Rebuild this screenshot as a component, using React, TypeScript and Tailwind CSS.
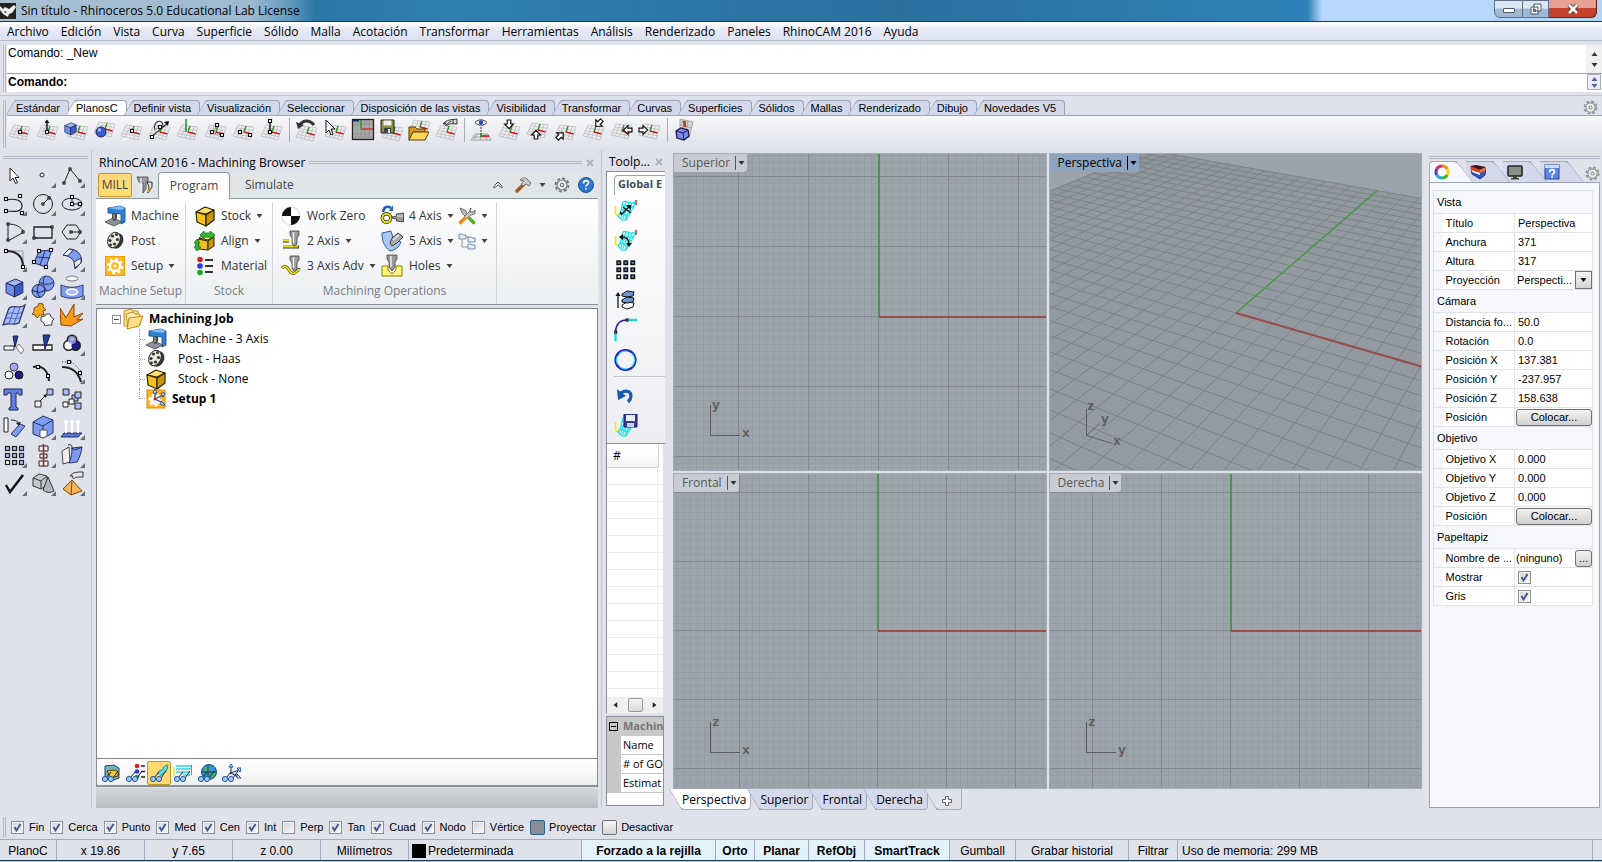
import React, { ReactNode } from "react";

/* ---------- fonts ---------- */
const UI = "font-['Open_Sans','Noto_Sans',sans-serif]";

/* ---------- small drawing helpers ---------- */
const Sq = ({ x, y, f = "#fff", s = 3 }: { x: number; y: number; f?: string; s?: number }) => (
  <rect x={x - s / 2} y={y - s / 2} width={s} height={s} fill={f} stroke="#111" strokeWidth="1.1" />
);

const Svg = ({ s = 24, children, className = "" }: { s?: number; children: ReactNode; className?: string }) => (
  <svg width={s} height={s} viewBox={`0 0 ${s} ${s}`} fill="none" className={`shrink-0 ${className}`} aria-hidden="true">
    {children}
  </svg>
);

const Down = ({ c = "#444" }: { c?: string }) => (
  <svg width="7" height="4" viewBox="0 0 7 4" aria-hidden="true" className="shrink-0">
    <path d="M0.5 0h6L3.5 4z" fill={c} />
  </svg>
);

const Plane = ({ dx = 0, dy = 0 }: { dx?: number; dy?: number }) => {
  const a = [6, 7], b = [22, 9], c = [18, 22], d = [1, 18];
  let path = "";
  for (let i = 0; i <= 4; i++) {
    const t = i / 4;
    const m = (p: number[], q: number[]) => `${(p[0] + (q[0] - p[0]) * t).toFixed(1)} ${(p[1] + (q[1] - p[1]) * t).toFixed(1)}`;
    path += `M${m(a, d)}L${m(b, c)}M${m(a, b)}L${m(d, c)}`;
  }
  return (
    <g transform={`translate(${dx} ${dy})`}>
      <path d={path} stroke="#bcbcbc" strokeWidth="0.8" />
      <path d="M12 14l2-6" stroke="#2a9a2a" strokeWidth="1.5" />
      <path d="M12 14l7.500 2" stroke="#d01818" strokeWidth="1.6" />
    </g>
  );
};

const Arrow = ({ x, y, r = 0 }: { x: number; y: number; r?: number }) => (
  <path d="M-1.8 -4h3.6v4h2.6l-4.4 4.6l-4.4 -4.6h2.6z" transform={`translate(${x} ${y}) rotate(${r})`} fill="#fff" stroke="#111" strokeWidth="1.2" />
);

const Cube = ({ x = 0, y = 0, k = 1, a = "#9db4f5", b = "#7391ec", c = "#3c5bc4" }: { x?: number; y?: number; k?: number; a?: string; b?: string; c?: string }) => (
  <g transform={`translate(${x} ${y}) scale(${k})`} stroke="#1b2450" strokeWidth="0.9" strokeLinejoin="round">
    <path d="M1 5l9-4 7 3-8 4z" fill={a} />
    <path d="M1 5l8 3v10l-8-4z" fill={b} />
    <path d="M9 8l8-4v10l-8 4z" fill={c} />
  </g>
);

/* ---------- construction-plane toolbar ---------- */
const cplane: { name: string; icon: ReactNode }[][] = [
  [
    { name: "Definir origen", icon: <><Plane /><Sq x={12} y={14} /></> },
    { name: "Elevación", icon: <><Plane /><path d="M11 14V3" stroke="#111" strokeWidth="1.4" /><path d="M8.500 5L11 1.500 13.500 5z" fill="#111" /><Sq x={11} y={14} /></> },
    { name: "A objeto", icon: <><Plane dx={2} /><Cube x={0} y={4} k={0.72} /></> },
    { name: "A superficie", icon: <><Plane dy={-3} dx={1} /><circle cx="9" cy="14" r="5" fill="#3c5bd0" stroke="#16245e" /><circle cx="7.500" cy="12" r="1.700" fill="#a9bdff" /></> },
    { name: "Perpendicular a curva", icon: <><path d="M3 22C16 20 9 4 22 2" stroke="#fff" strokeWidth="1.8" /><Plane /><Sq x={12} y={13} /></> },
    { name: "Rotar", icon: <><Plane /><path d="M2 20L20 5M7 12C4 2 16 0 15 9" stroke="#333" strokeWidth="1.1" /><path d="M16 4l5-1-1 5z" fill="#111" /><Sq x={12} y={9} /><Sq x={4} y={19} /></> },
    { name: "Vertical", icon: <><Plane /><path d="M10 14V1" stroke="#2a9a2a" strokeWidth="1.6" /></> },
    { name: "Por tres puntos", icon: <><Plane /><path d="M9 15l4-8M9 15l9 2" stroke="#333" strokeDasharray="1 1" /><Sq x={8} y={14} /><Sq x={13} y={7} /><Sq x={18} y={17} /></> },
    { name: "Eje X", icon: <><Plane /><Sq x={8} y={14} /><Sq x={18} y={17} /></> },
    { name: "Eje Z", icon: <><Plane /><path d="M10 14V4" stroke="#111" strokeWidth="1.4" /><Sq x={10} y={3} /><Sq x={10} y={14} /></> },
  ],
  [
    { name: "Deshacer", icon: <><Plane dy={1} /><path d="M4 8C8 1 15 2 19 7" stroke="#333" strokeWidth="3" /><path d="M1 4l2 7 6-4z" fill="#333" /></> },
    { name: "Seleccionar plano", icon: <><Plane dx={1} /><path d="M3 2v13l3-3 2 5 2-1-2-5h4z" fill="#fff" stroke="#111" /></> },
    {
      name: "Vista en planta",
      icon: <><rect x="1.500" y="1.500" width="21" height="20" fill="#a9a9a9" stroke="#222" strokeWidth="1.300" /><path d="M6 2v19M10 2v19M14 2v19M18 2v19M2 6h20M2 16h20M2 19h20" stroke="#8f8f8f" strokeWidth="0.800" /><path d="M10 2v9" stroke="#2a9a2a" strokeWidth="1.500" /><path d="M10 11h12" stroke="#d03030" strokeWidth="1.500" /><path d="M2 2h6v1.500H2z" fill="#1a2580" /></>,
    },
    { name: "Guardar plano", icon: <><Plane dx={2} dy={1} /><path d="M2 2h13v13H2z" fill="#8f8a3c" stroke="#222" /><path d="M4.500 2.500h8v5h-8z" fill="#eee" /><path d="M5 10h7v5H5z" fill="#444" /><path d="M9 11h2v4H9z" fill="#ddd" /></> },
    { name: "Abrir plano", icon: <><Plane dy={-5} dx={1} /><path d="M2 9h6l2 2h8v3H7l-4 8H2z" fill="#d99a20" stroke="#5a3a00" /><path d="M6 14h16l-4 8H2z" fill="#ffd65c" stroke="#5a3a00" /></> },
    { name: "Propiedades", icon: <><Plane /><path d="M8 6c4-5 8-4 14-5v5c-5 0-7-1-9 1s-4 0-2-2z" fill="#d9d9d9" stroke="#333" /><path d="M11 7l5-4M18 1v5" stroke="#333" /></> },
  ],
  [
    { name: "Plano desde vista", icon: <><path d="M5 16h13l3 6H1zM11 16l-1 6M3 19h17M7 16l-3 6M15 16l2 6" stroke="#a0a0a0" /><path d="M11 9v10" stroke="#333" strokeDasharray="2 1" /><path d="M11 15v4" stroke="#2a9a2a" strokeWidth="1.600" /><path d="M11 18h8" stroke="#d01818" strokeWidth="1.600" /><path d="M5 4.500C8 1 14 1 17 4.500 14 8 8 8 5 4.500z" fill="#fff" stroke="#333" /><circle cx="11" cy="4.500" r="2.200" fill="#2b46c0" /></> },
    { name: "Superior", icon: <><Plane /><Arrow x={11} y={6} /></> },
    { name: "Inferior", icon: <><Plane dy={-2} /><Arrow x={10} y={17} r={180} /></> },
    { name: "Frontal", icon: <><Plane /><Arrow x={6} y={18} r={225} /></> },
    { name: "Posterior", icon: <><Plane /><Arrow x={17} y={5} r={45} /></> },
    { name: "Derecha", icon: <><Plane dy={-1} /><Arrow x={18} y={12} r={90} /></> },
    { name: "Izquierda", icon: <><Plane dy={-1} /><Arrow x={5} y={12} r={270} /></> },
  ],
  [{ name: "Plano a objeto", icon: <><path d="M7 1l13 3-4 16-9-4z" fill="#d4d4d4" stroke="#aaa" /><path d="M11 2l-1 10M15 3l-2 11M7 7l12 3" stroke="#999" strokeWidth="0.800" /><path d="M12 9l-2-6" stroke="#2a9a2a" strokeWidth="1.600" /><path d="M12 9V3" stroke="#d01818" strokeWidth="1.600" /><path d="M3 13l5-3 7 2 1 6-5 4-7-2z" fill="#7f8cf5" stroke="#15193f" strokeWidth="1.300" /><path d="M3 13l7 2 5-3M10 15l1 7" stroke="#15193f" /></> }],
];

/* ---------- left tool palette ---------- */
const blue = "#7f9bf0";
const lb = "#a9bcf7";
const K = "#222";
const palette: { n: string; i: ReactNode; nofold?: boolean }[] = [
  { n: "Seleccionar", nofold: true, i: <path d="M8 5v13l3-3 2.500 5.500 2-1L13 14.500h4z" fill="#fff" stroke={K} /> },
  { n: "Punto", i: <circle cx="11" cy="12" r="2" fill="#fff" stroke={K} /> },
  { n: "Polilínea", i: <><path d="M4 20L10 6l11 13" stroke={K} /><Sq x={4} y={20} s={2} /><Sq x={10} y={6} s={2} /><Sq x={20} y={18} s={2} /></> },
  { n: "Curva", i: <><path d="M4 9c9-2 16 0 16 6s-7 6-16 5" stroke={K} strokeWidth="1.200" /><Sq x={4} y={8} /><Sq x={18} y={5} /><Sq x={4} y={20} /><Sq x={20} y={22} /></> },
  { n: "Círculo", i: <><circle cx="12" cy="13" r="9.500" stroke={K} /><path d="M12 13l6-6" stroke={K} /><Sq x={12} y={13} s={2} /><Sq x={18} y={7} s={2} /></> },
  { n: "Elipse", i: <><ellipse cx="12" cy="13" rx="10" ry="6" stroke={K} /><path d="M12 6v7h9" stroke={K} /><Sq x={12} y={6} /><Sq x={12} y={13} /><Sq x={20} y={13} /></> },
  { n: "Arco", i: <><path d="M6 5v17L22 13M6 5c8 0 13 3 16 8" stroke={K} /><Sq x={6} y={5} s={2} /><Sq x={6} y={21} s={2} /><Sq x={21} y={13} s={2} /></> },
  { n: "Rectángulo", i: <><path d="M3 8h18v11H3z" stroke={K} strokeWidth="1.300" /><Sq x={3} y={19} s={2} /><Sq x={21} y={8} s={2} /></> },
  { n: "Polígono", i: <><path d="M7 6h9l5 7-5 7H7l-5-7z" stroke={K} /><path d="M11 13h8" stroke={K} /><Sq x={11} y={13} s={2} /><Sq x={20} y={13} s={2} /></> },
  { n: "Empalme", i: <><path d="M4 4h17v17" stroke="#999" /><path d="M4 4c10 0 17 4 17 16" stroke={K} strokeWidth="2" /><Sq x={4} y={4} /><Sq x={21} y={20} /></> },
  { n: "Superficie por puntos", i: <><path d="M8 4l13-1-6 17-12-4z" fill={blue} stroke="#27335f" /><path d="M14 4L9 18M6 10l13 1" stroke="#27335f" /><Sq x={8} y={4} /><Sq x={20} y={3} /><Sq x={3} y={15} /><Sq x={15} y={20} /></> },
  { n: "Barrido", i: <><path d="M3 8l6-6c9 0 14 7 12 14l-6 6C16 14 11 9 3 8z" fill={blue} stroke="#27335f" /><path d="M3 8l6-6 4 1-5 6zM15 21l-1-6 7-4v5z" fill="#eef" stroke="#27335f" /></> },
  { n: "Caja", i: <Cube x={3} y={3} k={1.05} /> },
  { n: "Esferas", i: <><circle cx="15.500" cy="8.500" r="7.500" fill={blue} stroke="#27335f" /><path d="M8 7c5 3 10 3 15 0M14 1c-3 5-2 11 2 15" stroke="#27335f" /><circle cx="7.500" cy="16" r="6.500" fill={blue} stroke="#1a2550" /><path d="M1 15c5 3 9 3 13 0M8 9.500c-3 4-2 9 1 13" stroke="#1a2550" /></> },
  { n: "Tubo", i: <><ellipse cx="12" cy="3.500" rx="6" ry="2.500" stroke="#777" fill="#f4f4f4" /><path d="M1 10c7 3 15 3 22 0v11c-7 3-15 3-22 0z" fill={blue} stroke="#27335f" /><ellipse cx="12" cy="17" rx="5.500" ry="3" fill={lb} stroke="#fff" strokeWidth="1.600" /></> },
  { n: "Malla", i: <><path d="M7 5c6-4 9 2 16-3l-6 18c-6 3-9-1-16 2z" fill={lb} stroke="#27335f" strokeWidth="1.200" /><path d="M13 4L7 20M18 4l-6 17M5 11c6-3 10 2 15-2M3 16c6-3 10 2 15-2" stroke="#4a66c4" /></> },
  { n: "Unir", nofold: true, i: <><path d="M3 5l4-2 1-3 4 1 0 3 3 3-3 1 1 4-4 0-3 3-2-3-3-1 2-2z" fill="#f5a81c" stroke="#7a4a00" /><path d="M10 14l4-1 1-2 4 0 1 3 3 2-2 2 0 4-4 0-3 1-1-3-3-2z" fill="#fafafa" stroke="#444" /></> },
  { n: "Explotar", nofold: true, i: <path d="M1 22L0 5l6 10L14 1v13l9-4-6 7 6-1-12 7z" fill="#f99a1c" stroke="#8a4400" /> },
  { n: "Recortar", nofold: true, i: <><path d="M2 15h10v4H2z" fill="#fff" stroke={K} /><path d="M14 16l3-3 5 6-3 4z" fill="#f3f3f3" stroke="#777" /><path d="M11 5h5l-3 11z" fill="#24409a" stroke="#111c55" /></> },
  { n: "Partir", nofold: true, i: <><path d="M2 14h19v5H2z" fill="#fff" stroke={K} strokeWidth="1.300" /><path d="M12 4h7l-5 14z" fill="#24409a" stroke="#111c55" /></> },
  { n: "Unión booleana", i: <><g stroke={K} strokeWidth="3"><circle cx="12" cy="9" r="4" /><circle cx="8.500" cy="14.500" r="4" /><circle cx="15.500" cy="14.500" r="4" /></g><circle cx="8.500" cy="14.500" r="4" fill="#fff" /><circle cx="15.500" cy="14.500" r="4" fill="#1c1f80" /><circle cx="12" cy="9" r="4" fill="#a3a5f5" opacity="0.800" /></> },
  { n: "Diferencia booleana", nofold: true, i: <><circle cx="12" cy="8" r="4" fill="#a3a5f5" stroke="#444" /><circle cx="7" cy="16" r="4" fill="#fff" stroke={K} /><circle cx="17" cy="16" r="4" fill="#1c1f80" stroke="#111" /></> },
  { n: "Editar puntos", nofold: true, i: <><path d="M2 8c8-2 15 2 16 14" stroke={K} strokeWidth="2" /><Sq x={7} y={8} /><Sq x={17} y={17} /></> },
  { n: "Puntos de control", i: <><path d="M2 3h10l9 9v10" stroke={K} strokeDasharray="1 2" /><path d="M2 8c9 0 16 4 19 15" stroke={K} strokeWidth="2" /><Sq x={9} y={3} /><Sq x={20} y={14} /></> },
  { n: "Texto", nofold: true, i: <path d="M2 2h18v6h-3l-1-2h-2v14l2 1v2H7v-2l2-1V6H6L5 8H2z" fill="#5f7fe0" stroke="#1b2450" /> },
  { n: "Mover", i: <><path d="M4 14h6v6H4z" fill="#eee" stroke={K} /><path d="M16 2h6v6h-6z" fill={lb} stroke={K} /><path d="M9 14l6-6" stroke={K} /><path d="M16 7l-1 4-3-3z" fill={K} /></> },
  { n: "Copiar", nofold: true, i: <><path d="M3 2h6v6H3zM12 8h6v6h-6zM15 16h6v6h-6z" fill={lb} stroke={K} /><path d="M15 5h6v6h-6z" fill={lb} stroke={K} /><path d="M3 15h5v5H3zM9 12h5v5H9z" fill="#f5f5f5" stroke={K} /></> },
  { n: "Rotar", nofold: true, i: <><path d="M2 3h4v14H2z" fill="#fff" stroke={K} /><path d="M9 19l9-10 5 2-9 11z" fill={blue} stroke="#27335f" /><path d="M9 5c4 0 7 1 8 4" stroke={K} /><path d="M19 7l-2 4-3-3z" fill={K} /></> },
  { n: "Editar sólido", i: <><path d="M2 7l10-6 10 4v13l-10 5-10-4z" fill={blue} stroke="#27335f" /><path d="M2 7l10 4 10-6M12 11v4" stroke="#27335f" /><path d="M9 15h7v6l-4 2-3-1z" fill="#fff" stroke="#555" /></> },
  { n: "Extruir", i: <><path d="M4 18h18l-4 4H1z" fill="#5573d8" stroke="#27335f" /><path d="M6 18V7M12 18V7M18 18V7" stroke="#fff" strokeWidth="2" /><path d="M3.500 8L6 4l2.500 4zM9.500 8L12 4l2.500 4zM15.500 8L18 4l2.500 4z" fill="#fff" /></> },
  { n: "Matriz", i: <>{[3, 10, 17].map((x) => [3, 10, 17].map((y) => <rect key={`${x}-${y}`} x={x + 0.5} y={y + 0.5} width="4" height="4" fill={y === 17 && x === 3 ? "#fff" : lb} stroke={K} strokeWidth="1.200" />))}</> },
  { n: "Alinear", i: <><path d="M8 3h9v5H8zM9 11h7v4H9zM8 18h9v5H8z" fill="#f0f0f0" stroke={K} /><path d="M12.500 1v23" stroke="#c0181c" strokeWidth="1.600" /></> },
  { n: "Flexionar", i: <><path d="M2 8l7-4 1 15-7 2z" fill="#f2f2f2" stroke="#444" /><path d="M12 5l10-1c-1 6-2 10-5 15l-8 1c2-5 3-9 3-15z" fill={blue} stroke="#27335f" /><path d="M12 5l3 2 7-3" stroke="#27335f" /><path d="M8 2c3-1 4 0 4 4" stroke={K} /></> },
  { n: "Comprobar", i: <path d="M4 14l4 7L21 4" stroke="#111" strokeWidth="2.400" /> },
  { n: "Sólidos", i: <><path d="M2 7l6-4 8 2v9l-6 4-8-3z" fill="#c4c7cd" stroke="#333" /><path d="M2 7l8 3 6-5M10 10v8" stroke="#333" /><path d="M17 6l6 14c-3 2-8 2-11-1z" fill="#b3b6bc" stroke="#333" /></> },
  { n: "Propiedades", i: <><path d="M12 9l10 11-11 4-8-6z" fill="#f4b55c" stroke="#7a4a00" /><path d="M12 9l-1 15" stroke="#7a4a00" /><path d="M10 5c3-4 7-4 13-4v5c-5 0-7 0-8 1s-4 0-2-2z" fill="#e6e6e6" stroke="#333" /></> },
];

/* ---------- ribbon icons ---------- */
const IMachine = () => <Svg s={22}><path d="M4 3l12-2 5 2v14l-4 2V9L4 8z" fill="#2f7fd6" stroke="#17477f" strokeWidth="0.800" /><path d="M4 3l12-2 5 2-4 2z" fill="#7fbcf5" /><path d="M1 17l8-4 9 4-8 4z" fill="#8b939d" stroke="#444" strokeWidth="0.800" /><path d="M8 8.500h5v4l-1 3h-3l-1-3z" fill="#444" /><path d="M10 9v5" stroke="#ccc" /></Svg>;
const IPost = () => (
  <Svg s={22}>
    <ellipse cx="13" cy="11" rx="6" ry="8" transform="rotate(25 13 11)" fill="#33333a" />
    <ellipse cx="10" cy="10" rx="6" ry="8" transform="rotate(25 10 10)" fill="#efe9da" stroke="#2c2c33" />
    <circle cx="8.500" cy="6" r="1.600" fill="#33333a" /><circle cx="12.500" cy="4.500" r="1.500" fill="#33333a" /><circle cx="13.500" cy="9.500" r="1.600" fill="#33333a" /><circle cx="6" cy="10.500" r="1.600" fill="#33333a" /><circle cx="10.500" cy="14" r="1.600" fill="#33333a" /><circle cx="6.500" cy="15" r="1.400" fill="#33333a" />
  </Svg>
);
const ISetup = () => <Svg s={22}><rect x="1.500" y="1.500" width="19" height="19" fill="#ffb61c" stroke="#f0a000" /><circle cx="11" cy="11" r="5" stroke="#fff" strokeWidth="2.500" /><circle cx="11" cy="11" r="7.200" stroke="#fff" strokeWidth="2.200" strokeDasharray="2.800 2.850" /><circle cx="11" cy="11" r="1.600" fill="#fff" /></Svg>;
const IStock = () => <Svg s={22}><g stroke="#2b2300" strokeWidth="1.200" strokeLinejoin="round"><path d="M2 7l9-5 9 3-8 4z" fill="#ffdf6e" /><path d="M2 7l10 3v11l-9-4z" fill="#f6c21c" /><path d="M12 10l8-5v10l-8 6z" fill="#c99708" /></g></Svg>;
const IAlign = () => <Svg s={22}><g stroke="#2b2300" strokeLinejoin="round"><path d="M5 8l6-4 9 2-6 4z" fill="#ffe27a" /><path d="M4 9l10 2v9l-9-1z" fill="#eebf25" /><path d="M14 11l6-4v9l-6 4z" fill="#c99708" /></g><path d="M6 5l4-4v2h6V1l5 4-5 4V7h-6v2zM3 9l3 4H4.500v4H7l-4 4-3-4h1.500v-4H0z" fill="#2ebb33" stroke="#0c6a10" strokeWidth="0.700" /></Svg>;
const IMaterial = () => <Svg s={22}><circle cx="6" cy="4.500" r="2.800" fill="#e02020" /><circle cx="6" cy="11" r="2.800" fill="#2838e0" /><circle cx="6" cy="17.500" r="2.800" fill="#1fa52a" /><path d="M11 5h8M11 11h8M11 17h8" stroke="#333" strokeWidth="1.800" /></Svg>;
const IZero = () => <Svg s={22}><circle cx="11" cy="11" r="9" fill="#fff" stroke="#bbb" strokeWidth="0.600" /><path d="M11 11V2a9 9 0 0 0-9 9zM11 11v9a9 9 0 0 0 9-9z" fill="#111" /></Svg>;
const tool = <><path d="M10 1h9v4l-2 3v5l-1.500 3h-2L12 13V8l-2-3z" fill="#9a9a9a" stroke="#444" strokeWidth="0.800" /><path d="M13.500 2v11" stroke="#eee" strokeWidth="1.500" /></>;
const I2Axis = () => <Svg s={22}><path d="M3 11h6M3 17h16" stroke="#333" strokeWidth="3" /><path d="M3 10.500h6M3 16.500h15" stroke="#f3e400" strokeWidth="1.800" />{tool}</Svg>;
const I3Axis = () => <Svg s={22}><path d="M2 13c3-3 5-1 7 2s4 5 7 2 2-3 4-2" stroke="#333" strokeWidth="3" /><path d="M2 13c3-3 5-1 7 2s4 5 7 2 2-3 4-2" stroke="#f3e400" strokeWidth="1.800" />{tool}</Svg>;
const I4Axis = () => <Svg s={24}><path d="M3 8C4 2 8 2 11 4" stroke="#1b5fc4" strokeWidth="2.500" /><path d="M9 7l4 0V1z" fill="#1b5fc4" /><circle cx="6.500" cy="14" r="4.200" fill="#fff" stroke="#222" strokeWidth="3.400" /><circle cx="6.500" cy="14" r="4.200" stroke="#f3e400" strokeWidth="2" /><path d="M11.500 13l5-1v-2l7-1v9l-7-1v-2l-5-1z" fill="#999" stroke="#333" strokeWidth="0.800" /><path d="M17 12h6" stroke="#eee" /></Svg>;
const I5Axis = () => <Svg s={24}><path d="M2 4l9-2 2 7 8 4c-2 5-5 8-11 9C3 17 2 10 2 4z" fill="#a9c8f0" stroke="#2f5c9c" /><path d="M10 14l2-5 6-5 5 4-6 6-5 3z" fill="#a9a9a9" stroke="#444" /><path d="M13 11l6-5" stroke="#eee" strokeWidth="1.500" /></Svg>;
const IHoles = () => <Svg s={24}><path d="M2 12h6v4l4 4 4-4v-4h6v10H2z" fill="#fff47a" stroke="#8a7d00" /><path d="M7 1h10v4l-2 3v5l-3 4-3-4V8L7 5z" fill="#9a9a9a" stroke="#444" strokeWidth="0.800" /><path d="M11 2v11" stroke="#eee" strokeWidth="1.500" /></Svg>;
const ITools = () => <Svg s={18}><path d="M2 1l5 2 4 6-2 2-5-5z" fill="#bbb" stroke="#555" strokeWidth="0.800" /><path d="M13 1l-1 4 4 0 1-2v4l-4 1-5 4-2-2 5-5z" fill="#ccc" stroke="#555" strokeWidth="0.800" /><path d="M6.500 11.500l-4 4" stroke="#f08c1c" strokeWidth="3.600" strokeLinecap="round" /><path d="M11.500 11.500l4 4" stroke="#5cab20" strokeWidth="3.600" strokeLinecap="round" /></Svg>;
const ITree = () => <Svg s={18}><path d="M4 7v8h7M4 5h8" stroke="#8596ae" /><path d="M1 2h3l1 1h3v4H1zM10 5h3l1 1h3v4h-7zM10 12h3l1 1h3v4h-7z" fill="#e9eef5" stroke="#7d90ab" /></Svg>;
const glasses = <><path d="M5 15l5-6M12 15l5-7" stroke="#222" /><circle cx="4" cy="16" r="2.600" fill="#9dc8f5" stroke="#2c5aa0" /><circle cx="10" cy="16" r="2.600" fill="#9dc8f5" stroke="#2c5aa0" /></>;

const Surface = ({ children }: { children?: ReactNode }) => (
  <Svg s={24}>
    <path d="M1.500 8v8l5 4" stroke="#f2ee00" strokeWidth="1.600" />
    <path d="M22 2v5" stroke="#d01818" strokeWidth="1.400" />
    <path d="M9 4c4-3 6 4 12 0-1 8-6 10-8 17-4 3-7 0-9-3 4-4 3-9 5-14zM12 3c-1 7-4 9-5 17M15 4c-1 8-5 9-6 17M18 5c-1 7-5 9-7 17M8 8c4-3 6 4 12 0M7 12c4-3 6 4 11 0M6 16c4-3 5 4 9 1" stroke="#0fe5ea" strokeWidth="1.200" />
    {children}
  </Svg>
);

const Gear = ({ s = 16, c = "#8a8d93" }: { s?: number; c?: string }) => (
  <svg width={s} height={s} viewBox="0 0 16 16" fill="none" aria-hidden="true">
    <circle cx="8" cy="8" r="6.600" stroke={c} strokeWidth="1.700" strokeDasharray="3 2.180" />
    <circle cx="8" cy="8" r="5" stroke={c} strokeWidth="1.200" fill="#f0f0f0" />
    <circle cx="8" cy="8" r="1.700" stroke={c} strokeWidth="1.100" />
  </svg>
);

/* ---------- viewports ---------- */
function gridPath(ox: number, oy: number, major: number, wantMajor: boolean) {
  let d = "";
  for (let i = -80; i <= 300; i++) {
    if ((i % 10 === 0) !== wantMajor) continue;
    const x = Math.round(ox + (i * major) / 10) + 0.5;
    const y = Math.round(oy + (i * major) / 10) + 0.5;
    if (x > 0) d += `M${x} 0V2400`;
    if (y > 0) d += `M0 ${y}H3200`;
  }
  return d;
}

const axisText = "font-['Liberation_Mono','DejaVu_Sans_Mono',monospace] text-[13px] font-bold";

const Ortho = ({ ox, oy, major, ay, h, v }: { ox: number; oy: number; major: number; ay: number; h: string; v: string }) => (
  <svg className="block h-full w-full" aria-hidden="true">
    <path d={gridPath(ox, oy, major, false)} stroke="#949ba3" strokeWidth="1" />
    <path d={gridPath(ox, oy, major, true)} stroke="#84878f" strokeWidth="1" />
    <rect x={ox} y="0" width="2" height={oy} fill="#4a994a" />
    <rect x={ox + 1} y={oy} width="3000" height="2" fill="#994a4a" />
    <path d={`M36.500 ${ay - 30}V${ay + 0.5}H66`} stroke="#5c5c60" fill="none" />
    <text x="38" y={ay - 26} fill="#5c5c60" className={axisText}>{v}</text>
    <text x="68" y={ay + 2} fill="#5c5c60" className={axisText}>{h}</text>
  </svg>
);

function project(x: number, y: number) {
  const depth = 317.3 - 0.433 * x + 0.75 * y;
  return `${(186 + (660 * (0.866 * x + 0.5 * y)) / depth).toFixed(1)} ${(159 - (660 * (-0.25 * x + 0.433 * y)) / depth).toFixed(1)}`;
}
function perspLines(step: number) {
  let d = "";
  for (let i = -200; i <= 200; i += step) d += `M${project(i, -200)}L${project(i, 200)}M${project(-200, i)}L${project(200, i)}`;
  return d;
}

const Persp = () => (
  <svg className="block h-full w-full" aria-hidden="true" fill="none">
    <path d={`M${project(-200, -200)}L${project(200, -200)}L${project(200, 200)}L${project(-200, 200)}z`} fill="#959ca4" />
    <path d={perspLines(2)} stroke="#8b9199" strokeWidth="1" opacity="0.300" />
    <path d={perspLines(10)} stroke="#7f828a" strokeWidth="1" />
    <path d={`M${project(0, 0)}L${project(0, 200)}`} stroke="#4a994a" strokeWidth="1.600" />
    <path d={`M${project(0, 0)}L${project(200, 0)}`} stroke="#994a4a" strokeWidth="2" />
    <path d="M36.500 255v26.500l13-12M36.500 281.500l26 8" stroke="#5c5c60" />
    <text x="37" y="256" fill="#5c5c60" className={axisText}>z</text>
    <text x="51" y="269" fill="#5c5c60" className={axisText}>y</text>
    <text x="63" y="291" fill="#5c5c60" className={axisText}>x</text>
  </svg>
);

const Viewport = ({ name, active, children }: { name: string; active?: boolean; children: ReactNode }) => (
  <section className="relative min-h-0 min-w-0 overflow-hidden border border-[#a3a9b6] bg-[#9da3ab]" aria-label={name}>
    {children}
    <button type="button" className={`absolute top-0 left-0 flex h-[18px] items-center pl-2 text-xs ${active ? "bg-[#8ea5c2] text-black" : "rounded-br bg-[#c9cdd3] text-[#555]"}`}>
      {name}
      <span className="ml-[5px] flex h-[14px] items-center border-l border-current pr-[2px] pl-[2px]"><Down c={active ? "#000" : "#333"} /></span>
    </button>
  </section>
);

/* ---------- controls ---------- */
const Check = ({ label, on }: { label: string; on?: boolean }) => (
  <label className="flex items-center gap-[5px]">
    <Box on={on} />
    {label}
  </label>
);
const Box = ({ on, label }: { on?: boolean; label?: string }) => (
  <span className="relative block h-[13px] w-[13px] shrink-0">
    <input type="checkbox" defaultChecked={on} aria-label={label} className="peer block h-[13px] w-[13px] appearance-none border border-[#8e8f8f] bg-linear-to-br from-[#cfd2d6] to-[#fbfbfb] outline-1 -outline-offset-2 outline-[#f4f4f4]" />
    <svg width="13" height="13" viewBox="0 0 13 13" className="pointer-events-none absolute inset-0 hidden peer-checked:block" aria-hidden="true">
      <path d="M3.500 6l2 3.500L9.500 3" fill="none" stroke="#41578f" strokeWidth="1.900" />
    </svg>
  </span>
);

const Grip = () => <div className="h-[3px] grow border-y border-[#b4bac9]" />;

const RibbonBtn = ({ icon, label, dd }: { icon: ReactNode; label?: string; dd?: boolean }) => (
  <button type="button" className="flex h-[25px] items-center gap-[5px] whitespace-nowrap" aria-label={label ?? "Más"}>
    {icon}
    {label}
    {dd && <Down />}
  </button>
);

const menus = ["Archivo", "Edición", "Vista", "Curva", "Superficie", "Sólido", "Malla", "Acotación", "Transformar", "Herramientas", "Análisis", "Renderizado", "Paneles", "RhinoCAM 2016", "Ayuda"];
const tabs = ["Estándar", "PlanosC", "Definir vista", "Visualización", "Seleccionar", "Disposición de las vistas", "Visibilidad", "Transformar", "Curvas", "Superficies", "Sólidos", "Mallas", "Renderizado", "Dibujo", "Novedades V5"];

/* ---------- properties ---------- */
type Row = [string, string, ("select" | "button" | "file" | "check")?];
const props: { title: string; rows: Row[] }[] = [
  { title: "Vista", rows: [["Título", "Perspectiva"], ["Anchura", "371"], ["Altura", "317"], ["Proyección", "Perspecti...", "select"]] },
  { title: "Cámara", rows: [["Distancia fo...", "50.0"], ["Rotación", "0.0"], ["Posición X", "137.381"], ["Posición Y", "-237.957"], ["Posición Z", "158.638"], ["Posición", "Colocar...", "button"]] },
  { title: "Objetivo", rows: [["Objetivo X", "0.000"], ["Objetivo Y", "0.000"], ["Objetivo Z", "0.000"], ["Posición", "Colocar...", "button"]] },
  { title: "Papeltapiz", rows: [["Nombre de ...", "(ninguno)", "file"], ["Mostrar", "", "check"], ["Gris", "", "check"]] },
];

const Value = ({ row }: { row: Row }) => {
  const [name, value, kind] = row;
  if (kind === "select")
    return (
      <div className="relative flex h-[18px] items-center">
        <select aria-label={name} className="h-[18px] w-full appearance-none bg-white pl-[2px] outline-none"><option>{value}</option></select>
        <span className="pointer-events-none absolute right-0 flex h-[18px] w-[17px] items-center justify-center border border-[#707070] bg-linear-to-b from-[#f4f4f4] to-[#d4d4d4]"><Down c="#000" /></span>
      </div>
    );
  if (kind === "button")
    return <button type="button" className="ml-px block h-[17px] w-[76px] rounded-[3px] border border-[#707070] bg-linear-to-b from-[#f4f4f4] to-[#cfcfcf] leading-none">{value}</button>;
  if (kind === "file")
    return (
      <div className="flex h-[18px] items-center justify-between pl-px">
        {value}
        <button type="button" aria-label="Examinar" className="h-[17px] w-[17px] rounded-[3px] border border-[#707070] bg-linear-to-b from-[#f4f4f4] to-[#cfcfcf] leading-none">...</button>
      </div>
    );
  if (kind === "check") return <div className="pl-[3px]"><Box on label={name} /></div>;
  return <input aria-label={name} defaultValue={value} className="block h-[18px] w-full pl-[3px] outline-none" />;
};

const sideTabs: { n: string; z: string; i: ReactNode }[] = [
  { n: "Propiedades", z: "z-40", i: <Svg s={16}><path d="M8 2a6 6 0 0 1 5.200 3" stroke="#f08a1c" strokeWidth="3" /><path d="M13.200 5a6 6 0 0 1 0 6" stroke="#e8d820" strokeWidth="3" /><path d="M13.200 11A6 6 0 0 1 8 14" stroke="#35b83a" strokeWidth="3" /><path d="M8 14a6 6 0 0 1-5.200-3" stroke="#25a8d8" strokeWidth="3" /><path d="M2.800 11a6 6 0 0 1 0-6" stroke="#4a3fd0" strokeWidth="3" /><path d="M2.800 5A6 6 0 0 1 8 2" stroke="#d82a8a" strokeWidth="3" /></Svg> },
  { n: "Capas", z: "z-30", i: <Svg s={16}><path d="M1 6l9 3 6-5-1 7-5 4-8-5z" fill="#2f57c0" stroke="#16245e" strokeWidth="0.800" /><path d="M1 5l9 3v3L2 8z" fill="#f5f5f5" /><path d="M0 2l10 4v3L1 6z" fill="#e23a1c" /><path d="M0 2l6-1 10 2-6 3z" fill="#3a1510" /><path d="M10 6l6-3-1 4-5 2z" fill="#f56a3a" /></Svg> },
  { n: "Visualización", z: "z-20", i: <Svg s={16}><rect x="1" y="2" width="14" height="10" rx="1" fill="#888e86" stroke="#222" strokeWidth="1.600" /><path d="M6 12h4v2h2v1.500H4V14h2z" fill="#444" /></Svg> },
  { n: "Ayuda", z: "z-10", i: <Svg s={16}><rect x="1" y="1" width="14" height="14" fill="#5b83e8" stroke="#2a4694" /><path d="M1 1h14v3H1z" fill="#cfdcf8" /><path d="M5.500 8.500c0-4 5-3.500 5-.500 0 2-2.500 1.800-2.500 3.500M8 12.500v1.500" stroke="#fff" strokeWidth="1.600" /></Svg> },
];

const status: { t: string; c: string }[] = [
  { t: "PlanoC", c: "w-[57px]" }, { t: "x 19.86", c: "w-[88px]" }, { t: "y 7.65", c: "w-[88px]" }, { t: "z 0.00", c: "w-[88px]" }, { t: "Milímetros", c: "w-[88px]" },
];
const toggles: { t: string; c: string; on?: boolean }[] = [
  { t: "Forzado a la rejilla", c: "w-[134px]", on: true }, { t: "Orto", c: "w-[39px]", on: true }, { t: "Planar", c: "w-[54px]", on: true }, { t: "RefObj", c: "w-[56px]", on: true }, { t: "SmartTrack", c: "w-[85px]", on: true },
  { t: "Gumball", c: "w-[66px]" }, { t: "Grabar historial", c: "w-[113px]" }, { t: "Filtrar", c: "w-[49px]" },
];

const tree: { t: string; i: ReactNode }[] = [
  { t: "Machine - 3 Axis", i: <IMachine /> },
  { t: "Post - Haas", i: <IPost /> },
  { t: "Stock - None", i: <IStock /> },
];

const browserTools: { n: string; i: ReactNode }[] = [
  { n: "Stock", i: <><path d="M4 3l9-1 5 3v10l-8 3-6-4z" fill="#6db3c2" stroke="#1d4652" /><path d="M6 8l8-1 3 2v4l-7 2z" fill="#f3c53a" stroke="#5a4300" /></> },
  { n: "Material", i: <><circle cx="12" cy="3" r="2.300" fill="#e02020" /><circle cx="12" cy="8.500" r="2.300" fill="#2838e0" /><circle cx="12" cy="14" r="2.300" fill="#1fa52a" /><path d="M16 3h4M16 8.500h4M16 14h4" stroke="#222" strokeWidth="1.500" /></> },
  { n: "Toolpath", i: <><path d="M8 11l3-4c4 2 2-5 8-5l-1 5c-3 1-4 5-7 6" fill="#5fe0e6" stroke="#178f98" /></> },
  { n: "Lista", i: <><path d="M1 4v9" stroke="#f2ee00" strokeWidth="1.600" /><path d="M3 3h15M3 6h15M3 9h14M10 12h7" stroke="#2fd3dc" strokeWidth="1.500" /><path d="M18.500 2v10" stroke="#888" /></> },
  { n: "Mundo", i: <><circle cx="12" cy="9" r="7.500" fill="#2f93d8" stroke="#14507e" /><path d="M7 5l5-2 1 4-4 3zM13 10l5-1-2 5-3 1z" fill="#46b84a" /><path d="M11 2v14M5 9h14" stroke="#123a70" /></> },
  { n: "Ejes", i: <><path d="M10 10V3M10 10l8-3M10 10l7 4" stroke="#1c48a8" strokeWidth="1.200" /><path d="M8 4l2-3 2 3zM16 5l4 0-1 4zM16 11l4 4-4 0z" fill="#fff" stroke="#1c48a8" /><circle cx="10" cy="10" r="1.300" fill="#d01818" /></> },
];

export default function App() {
  return (
    <div className="flex h-screen flex-col overflow-hidden bg-[#dfe2eb] font-['Liberation_Sans',Arial,sans-serif] text-[11px] leading-[14px] text-black select-none">
      {/* title bar */}
      <header className={`flex h-[22px] shrink-0 items-start justify-between border-b border-[#1d3a55] bg-[#b5d8fc] ${UI}`}>
        <div className="flex h-[21px] min-w-0 grow items-center bg-[linear-gradient(90deg,#a9c0d3_0,#9ebad0_250px,#5f9abf_290px,#2b77a8_315px,#2e7fb0_450px,#2a71a0_900px,#2f82b9_1308px,#b5d8fc_1322px)]">
          <svg width="16" height="16" viewBox="0 0 16 16" aria-hidden="true"><rect width="16" height="16" fill="#222" /><path d="M0 3l3 3 2-2 4 2 5-4 2 2-4 6-3 1-1 3-5-3-3-4z" fill="#eee" /><path d="M4 8l3 1-2 1z" fill="#222" /></svg>
          <h1 className="ml-[5px] text-xs">Sin título - Rhinoceros 5.0 Educational Lab License</h1>
        </div>
        <div className="flex h-[21px] items-start bg-[#b3d5f5] pr-[5px]">
          <button type="button" aria-label="Minimizar" className="flex h-[18px] w-[29px] items-center justify-center rounded-bl-md border border-[#5c6f85] bg-linear-to-b from-[#dce9f5] from-45% to-[#9fb9d3] to-50%"><span className="mt-[3px] h-[5px] w-[12px] rounded-[1px] border border-[#4d5665] bg-white" /></button>
          <button type="button" aria-label="Restaurar" className="flex h-[18px] w-[26px] items-center justify-center border-y border-r border-[#5c6f85] bg-linear-to-b from-[#dce9f5] from-45% to-[#9fb9d3] to-50%"><Svg s={12}><path d="M4 1h7v7H4zM1 4h7v7H1z" fill="#fff" stroke="#4d5665" /><path d="M3.500 6.500h2v2h-2z" fill="#8fa5bd" stroke="#4d5665" /></Svg></button>
          <button type="button" aria-label="Cerrar" className="flex h-[18px] w-[48px] items-center justify-center rounded-br-md border-r border-b border-[#5a2020] bg-linear-to-b from-[#e5a191] from-45% to-[#c5432c] to-50%"><Svg s={12}><path d="M2 2l8 8M10 2l-8 8" stroke="#5a3030" strokeWidth="4.500" /><path d="M2 2l8 8M10 2l-8 8" stroke="#fff" strokeWidth="2.600" /></Svg></button>
        </div>
      </header>

      {/* menu bar */}
      <nav className={`flex h-[19px] shrink-0 items-center gap-3 border-b border-[#b4b9c8] bg-linear-to-b from-white from-5% via-[#e8ebf5] via-40% to-[#dde2f3] pt-[2px] pl-[7px] text-xs ${UI}`}>
        {menus.map((m) => <button key={m} type="button">{m}</button>)}
      </nav>

      {/* command line */}
      <section className="mt-1 flex shrink-0 border-b border-[#c3c7d1] pb-[3px]" aria-label="Comando">
        <div className="mr-px ml-[3px] w-[3px] border-x border-[#b4bac9]" />
        <div className="flex min-w-0 grow flex-col bg-white">
          <div className="flex h-[29px] justify-between border-b border-[#9aa3b3]">
            <p className="pt-px pl-px text-[12px]">Comando: _New</p>
            <div className="flex w-[16px] flex-col items-center justify-around bg-[#f0f0f0] py-[3px]">
              <span className="rotate-180"><Down c="#333" /></span>
              <Down c="#333" />
            </div>
          </div>
          <div className="flex h-[18px] items-center justify-between pb-[2px] pl-px">
            <label htmlFor="cmd" className="text-[12px] font-bold">Comando:</label>
            <input id="cmd" className="h-4 min-w-0 grow px-1 outline-none" />
            <div className="mr-px flex h-[16px] w-[14px] flex-col items-center justify-around border border-[#a8adb8] bg-[#eceef2]">
              <span className="rotate-180"><Down c="#4b62b0" /></span>
              <Down c="#4b62b0" />
            </div>
          </div>
        </div>
      </section>

      {/* toolbar tabs */}
      <section className="flex h-[54px] shrink-0 pt-1" aria-label="Barras de herramientas">
        <div className="mr-[9px] ml-[3px] h-[48px] w-[3px] shrink-0 border-x border-[#b4bac9]" />
        <div className="flex min-w-0 grow flex-col">
          <div className="flex h-[15px] shrink-0 items-end gap-[6px] pr-1">
            {tabs.map((t) => (
              <button
                key={t}
                type="button"
                className={`relative isolate h-[15px] rounded-tr border-t border-r border-[#9aa3b8] pr-[8px] pl-[1px] text-[11px] whitespace-nowrap before:absolute before:-top-px before:-left-[5px] before:-z-10 before:h-[15px] before:w-[9px] before:-skew-x-30 before:rounded-tl before:border-t before:border-l before:border-[#9aa3b8] before:bg-inherit before:content-[''] ${t === "PlanosC" ? "bg-white" : "bg-[#d3d9ea]"}`}
              >
                {t}
              </button>
            ))}
            <button type="button" aria-label="Opciones" className="ml-auto"><Gear s={15} /></button>
          </div>
          <div className="-ml-2 flex h-[35px] items-start border-t border-[#9aa3b3] bg-linear-to-b from-[#f6f7f9] to-[#dfe2eb] pt-[2px]">
            {cplane.map((group, g) => (
              <div key={g} className={`flex items-center gap-1 ${g ? "ml-[5px] border-l border-[#a9adb5] pl-[5px]" : "pl-px"}`}>
                {group.map((b) => <button key={b.name} type="button" aria-label={b.name}><Svg>{b.icon}</Svg></button>)}
              </div>
            ))}
          </div>
        </div>
      </section>

      {/* main area */}
      <main className="flex min-h-0 grow">
        {/* tool palette */}
        <aside className="mb-[3px] w-[92px] shrink-0 border-r border-[#bfc4d0] pt-[6px]" aria-label="Herramientas">
          <div className="mr-[3px] ml-[3px] flex pb-[3px]"><Grip /></div>
          <div className="grid w-[87px] grid-cols-3 pl-px">
            {palette.map((p, k) => (
              <button key={k} type="button" aria-label={p.n} className="flex h-7 items-center justify-center">
                <Svg s={26}>{p.i}{!p.nofold && <path d="M25 20v5h-5z" fill="#6b6e74" />}</Svg>
              </button>
            ))}
          </div>
        </aside>

        {/* machining browser */}
        <section className={`mb-[3px] ml-1 flex w-[502px] shrink-0 flex-col text-xs ${UI}`} aria-label="Machining Browser">
          <div className="flex h-[22px] shrink-0 items-center gap-1 pt-[3px] pr-1 pl-[3px]">
            <h2>RhinoCAM 2016 - Machining Browser</h2>
            <Grip />
            <button type="button" aria-label="Cerrar panel" className="flex"><Svg s={8}><path d="M1 1l6 6M7 1L1 7" stroke="#a9afbc" strokeWidth="1.800" /></Svg></button>
          </div>
          <div className="flex h-[27px] shrink-0 items-center border-b border-[#8b98a0] bg-[#e0e5e8] text-[#444]">
            <button type="button" className="ml-[2px] h-6 w-[34px] rounded-[2px] border border-[#c2952c] bg-linear-to-b from-[#ffd77a] to-[#ffdf70]">MILL</button>
            <button type="button" aria-label="Herramienta" className="mx-1"><Svg s={18}><path d="M1 1h11v4l-2 2v6l-3 4V7L3 6z" fill="#999" stroke="#444" strokeWidth="0.800" /><path d="M5 2v12" stroke="#eee" strokeWidth="1.500" /><path d="M11 6h5v5l-4 6 1-6z" fill="#ddd" stroke="#333" /><path d="M12 16l2-4" stroke="#f0a000" strokeWidth="1.500" /></Svg></button>
            <button type="button" className="-mb-px h-[27px] w-[72px] rounded-t border border-b-0 border-[#8b98a0] bg-white">Program</button>
            <button type="button" className="ml-[15px]">Simulate</button>
            <div className="ml-auto flex items-center gap-2 pr-1">
              <button type="button" aria-label="Contraer" className="mr-1"><Svg s={10}><path d="M1 6l4-4 4 4v2L5 5 1 8z" fill="#fff" stroke="#555" /></Svg></button>
              <button type="button" aria-label="Opciones"><Svg s={16}><path d="M8 8l-6 6" stroke="#a8591c" strokeWidth="3.500" strokeLinecap="round" /><path d="M5 3c2-2 5-3 7-1l4 4-2 3-3-2-3 2-2-2 3-3z" fill="#c9c9c9" stroke="#555" strokeWidth="0.800" /></Svg></button>
              <Down />
              <button type="button" aria-label="Preferencias"><Gear s={16} c="#6f7276" /></button>
              <button type="button" aria-label="Ayuda"><Svg s={16}><circle cx="8" cy="8" r="7.500" fill="#2f78d2" stroke="#1a4c93" /><path d="M5.500 6.500c0-4 5.300-3.500 5-.500-.200 2-2.500 1.700-2.500 3.500M8 11v1.600" stroke="#fff" strokeWidth="1.600" /></Svg></button>
            </div>
          </div>
          <div className="flex h-[106px] shrink-0 border-b border-[#8d9196] bg-linear-to-b from-white to-[#eceff1] pt-1 text-[#333]">
            <div className="flex w-[90px] flex-col border-r border-[#d0d3d8] pl-2">
              <RibbonBtn icon={<IMachine />} label="Machine" />
              <RibbonBtn icon={<IPost />} label="Post" />
              <RibbonBtn icon={<ISetup />} label="Setup" dd />
              <span className="mt-[5px] -ml-2 text-center whitespace-nowrap text-[#777c86]">Machine Setup</span>
            </div>
            <div className="flex w-[87px] flex-col border-r border-[#d0d3d8] pl-2">
              <RibbonBtn icon={<IStock />} label="Stock" dd />
              <RibbonBtn icon={<IAlign />} label="Align" dd />
              <RibbonBtn icon={<IMaterial />} label="Material" />
              <span className="mt-[5px] -ml-2 text-center text-[#777c86]">Stock</span>
            </div>
            <div className="flex w-[224px] flex-col border-r border-[#d0d3d8] pl-[7px]">
              <div className="flex">
                <div className="w-[100px]">
                  <RibbonBtn icon={<IZero />} label="Work Zero" />
                  <RibbonBtn icon={<I2Axis />} label="2 Axis" dd />
                  <RibbonBtn icon={<I3Axis />} label="3 Axis Adv" dd />
                </div>
                <div className="w-[78px]">
                  <RibbonBtn icon={<I4Axis />} label="4 Axis" dd />
                  <RibbonBtn icon={<I5Axis />} label="5 Axis" dd />
                  <RibbonBtn icon={<IHoles />} label="Holes" dd />
                </div>
                <div>
                  <RibbonBtn icon={<ITools />} dd />
                  <RibbonBtn icon={<ITree />} dd />
                </div>
              </div>
              <span className="mt-[5px] -ml-[7px] text-center text-[#777c86]">Machining Operations</span>
            </div>
          </div>
          <div className="mt-[3px] min-h-0 grow border border-[#7e838b] bg-white pl-[15px]">
            <div className="flex h-5 items-center">
              <span className="flex h-[9px] w-[9px] items-center justify-center border border-[#919191]"><span className="h-px w-[5px] bg-[#33508f]" /></span>
              <Svg s={22} className="ml-px"><path d="M2 3l7-2 2 2 5 0v15H2z" fill="#ffe79a" stroke="#b98a1c" /><path d="M4 6l7-2 2 2 5 0v11l-12 3z" fill="#ffefb5" stroke="#b98a1c" /><path d="M7 10l14-2-4 10-12 3z" fill="#ffe08a" stroke="#b98a1c" /></Svg>
              <span className="ml-[5px] font-bold">Machining Job</span>
            </div>
            <ul className="ml-[27px] border-l border-dotted border-[#a0a0a0]">
              {tree.map((r) => (
                <li key={r.t} className="flex h-5 items-center">
                  <span className="w-[5px] border-t border-dotted border-[#a0a0a0]" />
                  {r.i}
                  <span className="ml-[11px]">{r.t}</span>
                </li>
              ))}
            </ul>
            <div className="ml-[27px] flex h-5 items-center">
              <span className="h-[10px] w-[6px] self-start border-b border-l border-dotted border-[#a0a0a0]" />
              <Svg s={22}><rect x="2" y="2" width="18" height="18" fill="#ffb61c" stroke="#e08a00" /><circle cx="10" cy="12" r="5" fill="#fff" stroke="#fff" strokeWidth="3" strokeDasharray="3 2" /><path d="M10 11V3M10 11l8-4M10 11l8 4" stroke="#1c48a8" strokeWidth="1.300" /><path d="M8 5l2-4 2 4zM16 5h4l-2 4zM16 13l4 4h-4z" fill="#fff" stroke="#1c48a8" /><circle cx="10" cy="11" r="1.500" fill="#d01818" /></Svg>
              <span className="ml-[5px] font-bold">Setup 1</span>
            </div>
          </div>
          <div className="flex h-[28px] shrink-0 items-center border border-t-0 border-b-2 border-[#8b8f96] bg-linear-to-b from-white to-[#eff0f1] pt-px pl-[2px]">
            {browserTools.map((b) => (
              <button key={b.n} type="button" aria-label={b.n} className={`flex h-6 w-6 items-center justify-center rounded-[2px] border ${b.n === "Toolpath" ? "border-[#c2952c] bg-[#ffda70]" : "border-transparent"}`}>
                <Svg s={20}>{b.i}{glasses}</Svg>
              </button>
            ))}
          </div>
          <div className="mt-px h-[20px] shrink-0 bg-linear-to-b from-[#d3d7da] to-[#b8bdc1]" />
        </section>

        {/* toolpath editor */}
        <section className={`mb-[3px] ml-[3px] flex w-[64px] shrink-0 flex-col overflow-hidden border-l border-[#bfc4d0] pl-1 text-xs ${UI}`} aria-label="Toolpath Editor">
          <div className="flex h-[21px] shrink-0 items-center gap-[5px] pt-[3px] pl-[3px]">
            <h2>Toolp...</h2>
            <button type="button" aria-label="Cerrar panel" className="flex"><Svg s={8}><path d="M1 1l6 6M7 1L1 7" stroke="#a9afbc" strokeWidth="1.800" /></Svg></button>
          </div>
          <div className="flex h-[273px] shrink-0 flex-col border-t border-b border-l border-[#8b8f96] bg-linear-to-b from-white to-[#eceef1] pt-[3px] pl-[7px]">
            <button type="button" className="h-[20px] shrink-0 rounded-tl border-t border-l border-[#9aa3ad] pb-[2px] pl-[3px] text-left text-[11px] font-bold whitespace-nowrap text-[#3d4a5c]">Global E</button>
            <div className="flex flex-col gap-[6px] pt-[3px]">
              <button type="button" aria-label="Mover"><Surface><path d="M7 17l8-8M9 9l8 6" stroke="#111" strokeWidth="1.300" /><path d="M12 7h5v5zM9 16H6v-3z" fill="#111" /></Surface></button>
              <button type="button" aria-label="Rotar"><Surface><path d="M7 9c6 0 8 2 8 8" stroke="#111" strokeWidth="1.300" /><path d="M9 6v6L5 9zM12 15h6l-3 4z" fill="#111" /></Surface></button>
              <button type="button" aria-label="Matriz"><Svg>{[3, 10, 17].map((x) => [3, 10, 17].map((y) => <rect key={`${x}-${y}`} x={x} y={y} width="3.500" height="3.500" fill={x === 3 && y === 17 ? "#fff" : "#5f86c4"} stroke="#111" strokeWidth="1.400" />))}</Svg></button>
              <button type="button" aria-label="Capas"><Svg><path d="M4 20V5" stroke="#111" strokeWidth="1.300" /><path d="M1.500 8L4 4l2.500 4z" fill="#111" /><path d="M8 17l5-3 7 1-1 4-6 2-5-2z" fill="#fff" stroke="#111" /><path d="M8 12l5-3 7 1-1 4-6 1-5-1zM8 6l5-3 7 1-1 4-6 1-5-1z" fill="#6f96d0" stroke="#111" /></Svg></button>
              <button type="button" aria-label="Entrada"><Svg><path d="M1.500 14C2 6 6 2 13 2" stroke="#2020c0" strokeWidth="1.600" /><path d="M1.500 14v9M13 2h10" stroke="#22d8e0" strokeWidth="2.400" /><Sq x={1.7} y={14} s={2} /><Sq x={13} y={2} s={2} /></Svg></button>
              <button type="button" aria-label="Círculo"><Svg><circle cx="11.500" cy="12" r="10" stroke="#2020c8" strokeWidth="2.200" /><circle cx="11.500" cy="12" r="9" stroke="#22e0e8" strokeWidth="1.200" strokeDasharray="8 4" /></Svg></button>
            </div>
            <div className="mt-[4px] mb-[7px] h-px shrink-0 bg-[#c0c3c8]" />
            <div className="flex flex-col gap-[6px]">
              <button type="button" aria-label="Deshacer"><Svg><path d="M6 10c5-5 11-3 11 2 0 3-1 4-3 6" stroke="#1858b8" strokeWidth="3.200" /><path d="M3 5l1 11 8-4z" fill="#1858b8" /></Svg></button>
              <button type="button" aria-label="Guardar"><Surface><path d="M10 0h13v13H10z" fill="#3a3c9c" stroke="#1b1d66" /><path d="M12 1h9v6h-9z" fill="#e9ebf7" /><path d="M13 9h7v4h-7z" fill="#cfd3ea" /></Surface></button>
            </div>
          </div>
          <div className="mr-[2px] flex min-h-0 grow flex-col border-l border-[#8b8f96] bg-white">
            <div className="mr-1 flex h-[24px] shrink-0 items-center border-r border-b border-[#d5d5d5] bg-linear-to-b from-white from-40% to-[#f2f3f5] pl-[6px]">#</div>
            <div className="min-h-0 grow overflow-hidden bg-[linear-gradient(90deg,transparent_50px,#ececec_50px,#ececec_51px,transparent_51px),repeating-linear-gradient(180deg,#fff_0,#fff_16px,#ececec_16px,#ececec_17px)]" />
            <div className="flex h-4 shrink-0 items-center justify-between bg-[#f0f0f0] px-[5px]">
              <span className="rotate-90"><Down c="#222" /></span>
              <span className="h-[14px] w-[15px] rounded-[2px] border border-[#979797] bg-linear-to-b from-[#f5f5f5] to-[#d9d9d9]" />
              <span className="-rotate-90"><Down c="#222" /></span>
            </div>
          </div>
          <div className="mt-[3px] mr-px mb-[2px] flex h-[90px] shrink-0 flex-col border border-[#8b8f96] bg-white text-[11px]">
            <div className="flex h-[19px] shrink-0 items-center gap-[5px] bg-[#c8c8c8] pl-[2px] font-bold text-[#777]">
              <span className="flex h-[9px] w-[9px] shrink-0 items-center justify-center border border-black"><span className="h-px w-[5px] bg-black" /></span>
              Machin
            </div>
            {["Name", "# of GO", "Estimat"].map((t) => (
              <div key={t} className="flex h-[19px] shrink-0 items-center border-b border-l-[14px] border-[#c8c8c8] pl-[2px] whitespace-nowrap">{t}</div>
            ))}
          </div>
        </section>

        {/* viewports */}
        <section className={`mt-[3px] ml-2 flex min-w-0 grow flex-col ${UI}`} aria-label="Vistas">
          <div className="grid min-h-0 grow grid-cols-2 grid-rows-[319fr_316fr] gap-[2px]">
            <Viewport name="Superior"><Ortho ox={204} oy={162} major={70} ay={281} h="x" v="y" /></Viewport>
            <Viewport name="Perspectiva" active><Persp /></Viewport>
            <Viewport name="Frontal"><Ortho ox={203} oy={156} major={69.2} ay={278} h="x" v="z" /></Viewport>
            <Viewport name="Derecha"><Ortho ox={180} oy={156} major={69.2} ay={278} h="y" v="z" /></Viewport>
          </div>
          <div className="flex h-[22px] shrink-0 items-start gap-[8px] pl-2 text-xs">
            {["Perspectiva", "Superior", "Frontal", "Derecha", "+"].map((t) => (
              <button
                key={t}
                type="button"
                className={`relative isolate flex h-[21px] items-center rounded-br border-r border-b border-[#a3abbd] pt-[2px] pr-[4px] pl-px before:absolute before:top-0 before:-left-[6px] before:-z-10 before:h-[21px] before:w-[12px] before:skew-x-30 before:rounded-bl before:border-b before:border-l before:border-[#a3abbd] before:bg-inherit before:content-[''] ${t === "Perspectiva" ? "bg-white" : t === "+" ? "bg-[#dfe2eb]" : "bg-[#d3d9ea]"}`}
              >
                {t === "+" ? <Svg s={20}><path d="M8.500 6.500h3v3h3v3h-3v3h-3v-3h-3v-3h3z" fill="#fff" stroke="#666" /></Svg> : t}
              </button>
            ))}
          </div>
        </section>

        {/* properties */}
        <aside className="mr-[2px] mb-[3px] ml-[7px] flex w-[171px] shrink-0 flex-col pt-[6px]" aria-label="Propiedades de vista">
          <div className="flex"><Grip /></div>
          <div className="mt-[2px] flex h-[21px] shrink-0 items-end">
            {sideTabs.map((t, k) => (
              <button
                key={t.n}
                type="button"
                aria-label={t.n}
                className={`relative isolate flex h-[21px] w-[28px] items-center border-t border-[#a3abbd] pl-1 ${t.z} before:absolute before:-top-px before:-right-[8px] before:-z-10 before:h-[21px] before:w-[16px] before:skew-x-38 before:rounded-tr before:border-t before:border-r before:border-[#a3abbd] before:bg-inherit before:content-[''] ${k ? "ml-[9px] bg-[#d3d9ea]" : "rounded-tl border-l bg-[#f6f7fa]"}`}
              >
                {t.i}
              </button>
            ))}
            <button type="button" aria-label="Opciones" className="relative z-40 ml-auto pb-px"><Gear s={15} /></button>
          </div>
          <div className="min-h-0 grow border border-[#9aa3b8] bg-[#f6f7fa] px-[3px] pt-[7px]">
            <table className="w-[160px] table-fixed border-collapse bg-white">
              <colgroup><col className="w-[9px]" /><col className="w-[72px]" /><col /></colgroup>
              {props.map((g) => (
                <tbody key={g.title}>
                  <tr className="h-[23px] border border-[#dfe2eb] bg-[#f6f7fa]"><th colSpan={3} scope="rowgroup" className="pl-[3px] text-left font-normal">{g.title}</th></tr>
                  {g.rows.map((r, k) => (
                    <tr key={k} className="h-[19px] border border-[#dfe2eb]">
                      <td className="bg-[#f6f7fa] p-0" />
                      <th scope="row" className="border-r border-[#dfe2eb] py-0 pr-0 pl-[3px] text-left font-normal whitespace-nowrap">{r[0]}</th>
                      <td className="p-0"><Value row={r} /></td>
                    </tr>
                  ))}
                </tbody>
              ))}
            </table>
          </div>
        </aside>
      </main>

      {/* object snaps */}
      <section className="flex h-7 shrink-0 items-center gap-[5px] pt-1 pl-[3px]" aria-label="Referencias a objetos">
        <div className="h-[20px] w-[3px] border-x border-[#b4bac9]" />
        <div className="flex items-center gap-[6px]">
          {["Fin", "Cerca", "Punto", "Med", "Cen", "Int"].map((t) => <Check key={t} label={t} on />)}
          <Check label="Perp" />
          {["Tan", "Cuad", "Nodo"].map((t) => <Check key={t} label={t} on />)}
          <Check label="Vértice" />
          <button type="button" className="flex items-center gap-1"><span className="h-[15px] w-[15px] rounded-[2px] border border-[#2c628b] bg-[#8b8d90]" />Proyectar</button>
          <button type="button" className="flex items-center gap-1"><span className="h-[15px] w-[15px] rounded-[2px] border border-[#707070] bg-linear-to-b from-[#f6f6f6] to-[#d6d6d6]" />Desactivar</button>
        </div>
      </section>

      {/* status bar */}
      <footer className="flex h-[21px] shrink-0 border-t border-[#a3abbd] text-[12px]">
        {status.map((s) => <div key={s.t} className={`flex shrink-0 items-center justify-center border-r border-[#a3abbd] pt-px ${s.c}`}>{s.t}</div>)}
        <button type="button" className="flex w-[173px] shrink-0 items-center gap-[2px] border-r border-[#a3abbd] pt-px pl-[3px]"><span className="h-[14px] w-[14px] bg-black" />Predeterminada</button>
        {toggles.map((s) => <button key={s.t} type="button" aria-pressed={!!s.on} className={`flex shrink-0 items-center justify-center border-r border-[#a3abbd] pt-px whitespace-nowrap ${s.c} ${s.on ? "bg-[#e3f2fb] font-bold" : ""}`}>{s.t}</button>)}
        <div className="mr-[9px] flex grow items-center border-r border-[#a3abbd] pt-px pl-1">Uso de memoria: 299 MB</div>
      </footer>
      <div className="h-[2px] shrink-0 border-t border-[#1d3a55] bg-[#a5cdd8]" />
    </div>
  );
}
